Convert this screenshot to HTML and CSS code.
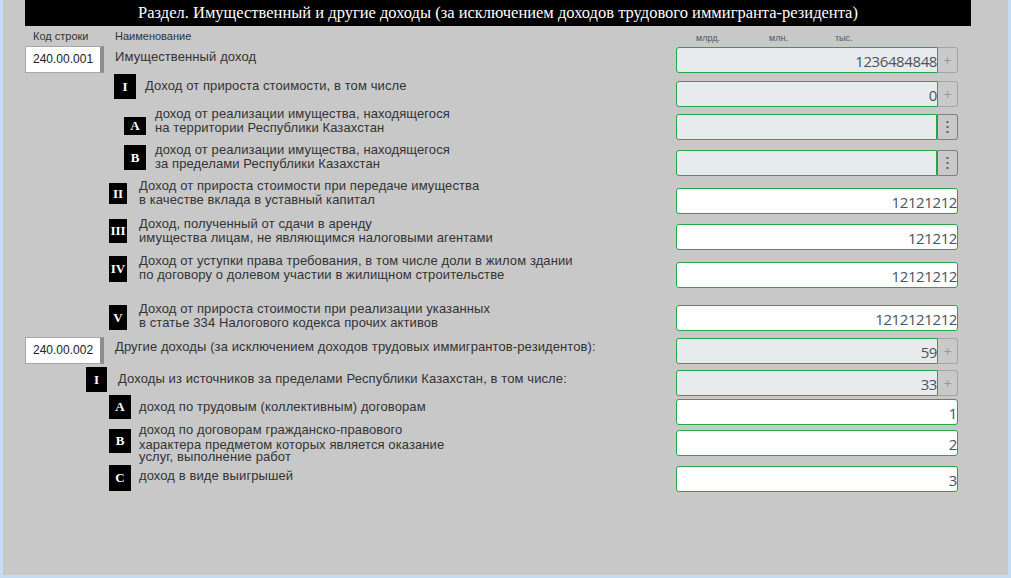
FILE: index.html
```html
<!DOCTYPE html>
<html lang="ru">
<head>
<meta charset="utf-8">
<title>Имущественный и другие доходы</title>
<link rel="stylesheet" href="styles.css">
</head>
<body>
<div class="page">
  <div class="title">Раздел. Имущественный и другие доходы (за исключением доходов трудового иммигранта-резидента)</div>

  <div class="colhead">
    <span class="ch-code">Код строки</span>
    <span class="ch-name">Наименование</span>
    <span class="units"><span class="u-bn">млрд.</span><span class="u-mn">млн.</span><span class="u-th">тыс.</span></span>
  </div>

  <div class="row r1">
    <div class="left"><div class="code">240.00.001</div><div class="text">Имущественный доход</div></div>
    <div class="field addon"><input class="input ro" readonly value="1236484848"><span class="btn plus">+</span></div>
  </div>

  <div class="row r2">
    <div class="left"><div class="badge">I</div><div class="text">Доход от прироста стоимости, в том числе</div></div>
    <div class="field addon"><input class="input ro" readonly value="0"><span class="btn plus">+</span></div>
  </div>

  <div class="row r3">
    <div class="left"><div class="badge">A</div><div class="text">доход от реализации имущества, находящегося<br>на территории Республики Казахстан</div></div>
    <div class="field addon"><input class="input ro" readonly value=""><span class="btn menu"><svg width="3" height="14" viewBox="0 0 3 14"><rect x="0.5" y="1" width="2" height="2"/><rect x="0.5" y="6" width="2" height="2"/><rect x="0.5" y="11" width="2" height="2"/></svg></span></div>
  </div>

  <div class="row r4">
    <div class="left"><div class="badge">B</div><div class="text">доход от реализации имущества, находящегося<br>за пределами Республики Казахстан</div></div>
    <div class="field addon"><input class="input ro" readonly value=""><span class="btn menu"><svg width="3" height="14" viewBox="0 0 3 14"><rect x="0.5" y="1" width="2" height="2"/><rect x="0.5" y="6" width="2" height="2"/><rect x="0.5" y="11" width="2" height="2"/></svg></span></div>
  </div>

  <div class="row r5">
    <div class="left"><div class="badge">II</div><div class="text">Доход от прироста стоимости при передаче имущества<br>в качестве вклада в уставный капитал</div></div>
    <div class="field"><input class="input" value="12121212"></div>
  </div>

  <div class="row r6">
    <div class="left"><div class="badge">III</div><div class="text">Доход, полученный от сдачи в аренду<br>имущества лицам, не являющимся налоговыми агентами</div></div>
    <div class="field"><input class="input" value="121212"></div>
  </div>

  <div class="row r7">
    <div class="left"><div class="badge">IV</div><div class="text">Доход от уступки права требования, в том числе доли в жилом здании<br>по договору о долевом участии в жилищном строительстве</div></div>
    <div class="field"><input class="input" value="12121212"></div>
  </div>

  <div class="row r8">
    <div class="left"><div class="badge">V</div><div class="text">Доход от прироста стоимости при реализации указанных<br>в статье 334 Налогового кодекса прочих активов</div></div>
    <div class="field"><input class="input" value="1212121212"></div>
  </div>

  <div class="row r9">
    <div class="left"><div class="code">240.00.002</div><div class="text">Другие доходы (за исключением доходов трудовых иммигрантов-резидентов):</div></div>
    <div class="field addon"><input class="input ro" readonly value="59"><span class="btn plus">+</span></div>
  </div>

  <div class="row r10">
    <div class="left"><div class="badge">I</div><div class="text">Доходы из источников за пределами Республики Казахстан, в том числе:</div></div>
    <div class="field addon"><input class="input ro" readonly value="33"><span class="btn plus">+</span></div>
  </div>

  <div class="row r11">
    <div class="left"><div class="badge">A</div><div class="text">доход по трудовым (коллективным) договорам</div></div>
    <div class="field"><input class="input" value="1"></div>
  </div>

  <div class="row r12">
    <div class="left"><div class="badge">B</div><div class="text"><span class="first">доход по договорам гражданско-правового</span><span class="rest">характера предметом которых является оказание<br>услуг, выполнение работ</span></div></div>
    <div class="field"><input class="input" value="2"></div>
  </div>

  <div class="row r13">
    <div class="left"><div class="badge">C</div><div class="text">доход в виде выигрышей</div></div>
    <div class="field"><input class="input" value="3"></div>
  </div>
</div>
</body>
</html>
```

FILE: styles.css
```css
html, body {
  margin: 0;
  padding: 0;
}

body {
  background: #c5dcf5;
  font-family: "Liberation Sans", Arial, sans-serif;
  color: #333;
}

.page {
  margin: 0 3px 3px 3px;
  height: 575px;
  background: #c8c8c8;
  overflow: hidden;
}

/* section title */
.title {
  margin: 0 37px 0 22px;
  height: 26px;
  background: #000;
  color: #fff;
  font-family: "Liberation Serif", "Times New Roman", serif;
  font-size: 16.5px;
  line-height: 25px;
  text-align: center;
  white-space: nowrap;
}

/* column captions */
.colhead {
  display: flex;
  height: 20px;
  align-items: center;
  padding-left: 30px;
  margin-right: 50px;
  font-size: 11px;
}

.ch-code {
  width: 82px;
}

.ch-name {
  flex: 1;
}

.units {
  width: 282px;
  display: flex;
  padding-left: 20px;
  box-sizing: border-box;
  font-size: 9px;
  color: #555;
  margin-top: 3px;
}

.u-bn { width: 73px; }
.u-mn { width: 66px; }
.u-th { width: 40px; }

/* form rows */
.row {
  display: flex;
  height: 26px;
  margin-right: 50px;
}

.left {
  flex: 1;
  display: flex;
  align-items: flex-start;
  min-width: 0;
}

.text {
  font-size: 13px;
  letter-spacing: 0.1px;
  line-height: 14px;
  white-space: nowrap;
}

.code {
  flex: none;
  width: 67px;
  height: 25px;
  margin-left: 22px;
  background: #fff;
  border: 1px solid #a8a8a8;
  border-right: 4px solid #8c8c8c;
  font-size: 12px;
  line-height: 25px;
  padding-left: 7px;
  box-sizing: content-box;
  color: #222;
}

.badge {
  flex: none;
  background: #000;
  color: #fff;
  font-family: "Liberation Serif", "Times New Roman", serif;
  font-weight: bold;
  font-size: 13px;
  display: flex;
  align-items: center;
  justify-content: center;
  width: 22px;
  height: 25px;
}

.field {
  flex: none;
  width: 282px;
  height: 26px;
  display: flex;
}

.input {
  flex: 1;
  min-width: 0;
  height: 26px;
  box-sizing: border-box;
  border: 1px solid #28a745;
  border-radius: 3px;
  background: #fff;
  margin: 0;
  padding: 2px 0 0 0;
  text-align: right;
  font-family: "Open Sans", sans-serif;
  font-size: 15px;
  letter-spacing: -0.4px;
  color: #4a5360;
  outline: none;
}

.input.ro {
  background: #e8ebee;
}

.addon .input {
  border-radius: 3px 0 0 3px;
}

.btn {
  flex: none;
  width: 20px;
  height: 26px;
  box-sizing: border-box;
  border: 1px solid #a4a4a4;
  border-left: none;
  border-radius: 0 3px 3px 0;
  background: #c9c9c9;
  display: flex;
  align-items: center;
  justify-content: center;
}

.btn.plus {
  color: #9a9a9a;
  font-family: "Open Sans", sans-serif;
  font-size: 15px;
}

.btn.menu {
  width: 21px;
  border-color: #7b8088;
  border-left: 1px solid #6c737b;
}

.btn.menu svg {
  fill: #5a5f66;
}

/* row placement */
.r1 { margin-top: 1px; }
.r1 .code { margin-top: -1px; }
.r1 .text { margin: 3px 0 0 11px; }

.r2 { margin-top: 8px; }
.r2 .badge { margin: -7px 0 0 111px; height: 25px; }
.r2 .text { margin: -2px 0 0 9px; }

.r3 { margin-top: 7px; }
.r3 .badge { margin: 3px 0 0 121px; height: 18px; }
.r3 .text { margin: -7px 0 0 9px; }

.r4 { margin-top: 10px; }
.r4 .badge { margin: -5px 0 0 121px; height: 25px; }
.r4 .text { margin: -7px 0 0 9px; }

.r5 { margin-top: 12px; }
.r5 .badge { margin: -5px 0 0 106px; width: 18px; height: 21px; }
.r5 .text { margin: -9px 0 0 12px; }

.r6 { margin-top: 10px; }
.r6 .badge { margin: -5px 0 0 106px; width: 18px; height: 24px; }
.r6 .text { margin: -7px 0 0 12px; }

.r7 { margin-top: 12px; }
.r7 .badge { margin: -6px 0 0 106px; width: 18px; height: 26px; }
.r7 .text { margin: -8px 0 0 12px; }

.r8 { margin-top: 17px; }
.r8 .badge { margin: 0 0 0 106px; width: 18px; height: 25px; }
.r8 .text { margin: -3px 0 0 12px; }

.r9 { margin-top: 7px; }
.r9 .code { margin-top: -1px; }
.r9 .text { margin: 2px 0 0 11px; }

.r10 { margin-top: 6px; }
.r10 .badge { margin: -3px 0 0 83px; width: 21px; height: 25px; }
.r10 .text { margin: 2px 0 0 11px; }

.r11 { margin-top: 3px; }
.r11 .badge { margin: -4px 0 0 106px; height: 24px; }
.r11 .text { margin: 1px 0 0 8px; }

.r12 { margin-top: 5px; }
.r12 .badge { margin: -1px 0 0 106px; height: 24px; }
.r12 .text { margin: -7px 0 0 8px; }
.r12 .first { display: block; height: 15px; }
.r12 .rest { display: block; line-height: 11.5px; margin-top: 1px; }

.r13 { margin-top: 10px; }
.r13 .badge { margin: -1px 0 0 106px; height: 26px; }
.r13 .text { margin: 3px 0 0 8px; }
```
